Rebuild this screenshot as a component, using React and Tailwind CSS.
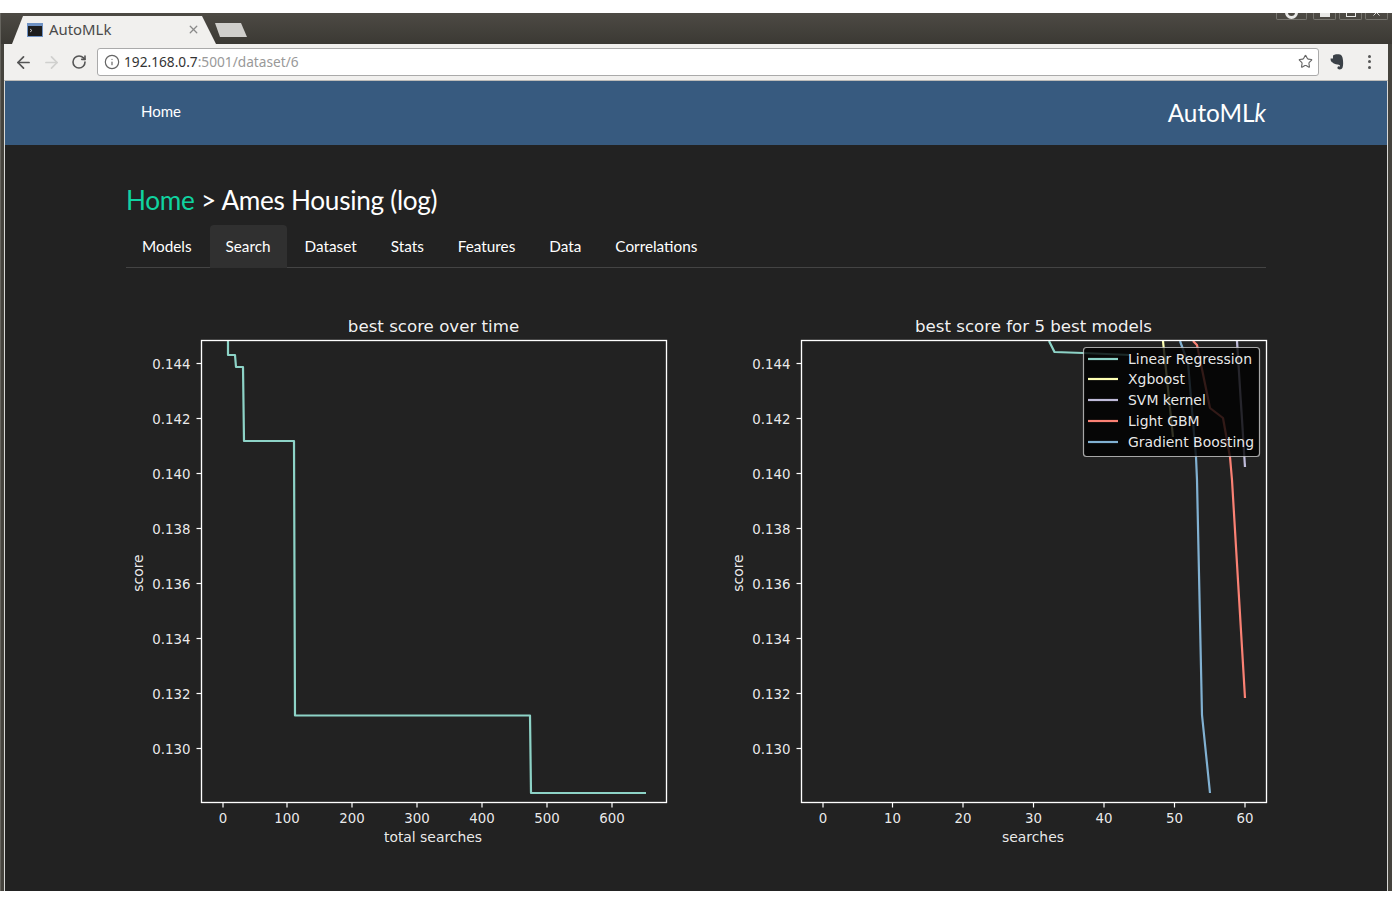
import React from "react";
import { ArrowLeft, ArrowRight, RotateCw, Info, Star, X } from "lucide-react";

const yTicks = [
  ["0.144", 364],
  ["0.142", 419],
  ["0.140", 474],
  ["0.138", 529],
  ["0.136", 584],
  ["0.134", 639],
  ["0.132", 694],
  ["0.130", 749],
];

function Chart({ x0, title, xlabel, xTicks, children, overlay }) {
  const box = { l: x0 + 75.5, r: x0 + 540.5, t: 340.5, b: 802.5 };
  return (
    <svg
      viewBox={`${x0} 310 600 560`}
      className="w-[600px] h-[560px] shrink-0 block font-['DejaVu_Sans',sans-serif]"
    >
      <text x={(box.l + box.r) / 2 - 0.5} y="332" textAnchor="middle" fontSize="16.65" fill="#fff" fillOpacity="0.95">
        {title}
      </text>
      {children}
      {yTicks.map(([t, y]) => (
        <g key={t}>
          <line x1={box.l - 5} x2={box.l} y1={y - 0.5} y2={y - 0.5} stroke="#fff" strokeWidth="1.2" />
          <text x={box.l - 11} y={y + 5} textAnchor="end" fontSize="13.33" fill="#fff" fillOpacity="0.92">
            {t}
          </text>
        </g>
      ))}
      {xTicks.map(([t, x]) => (
        <g key={t}>
          <line x1={x} x2={x} y1={box.b} y2={box.b + 5} stroke="#fff" strokeWidth="1.2" />
          <text x={x} y="823" textAnchor="middle" fontSize="13.33" fill="#fff" fillOpacity="0.92">
            {t}
          </text>
        </g>
      ))}
      <text
        transform={`translate(${x0 + 17} 573) rotate(-90)`}
        textAnchor="middle"
        fontSize="13.9"
        fill="#fff"
        fillOpacity="0.92"
      >
        score
      </text>
      <text x={(box.l + box.r) / 2 - 1} y="842" textAnchor="middle" fontSize="13.9" fill="#fff" fillOpacity="0.92">
        {xlabel}
      </text>
      {overlay}
      <rect x={box.l} y={box.t} width={box.r - box.l} height={box.b - box.t} fill="none" stroke="#fff" strokeWidth="1.33" />
    </svg>
  );
}

const P = ({ d, c }) => <polyline points={d} fill="none" stroke={c} strokeWidth="2.2" strokeLinejoin="round" />;

function Legend() {
  const rows = [
    ["Linear Regression", "#8dd3c7", 359],
    ["Xgboost", "#feffb3", 379],
    ["SVM kernel", "#bfbbd9", 400],
    ["Light GBM", "#fa8174", 421],
    ["Gradient Boosting", "#81b1d2", 442],
  ];
  return (
    <g>
      <rect x="1083.5" y="347.5" width="176" height="109" rx="3" fill="#000" fillOpacity="0.8" stroke="#ccc" strokeOpacity="0.8" strokeWidth="1.2" />
      {rows.map(([t, c, y]) => (
        <g key={t}>
          <line x1="1088" x2="1118" y1={y} y2={y} stroke={c} strokeWidth="2.2" />
          <text x="1128" y={y + 5} fontSize="13.95" fill="#fff" fillOpacity="0.92">
            {t}
          </text>
        </g>
      ))}
    </g>
  );
}

const tabs = ["Models", "Search", "Dataset", "Stats", "Features", "Data", "Correlations"];

export default function App() {
  return (
    <div className="w-[1392px] h-[904px] bg-white pt-[13px] overflow-hidden font-['Lato',sans-serif]">
      <div className="h-[878px] flex flex-col bg-[#45433d]">
        {/* tab strip */}
        <div className="relative h-[31px] shrink-0 bg-gradient-to-b from-[#4d4a44] to-[#3b3934] border-l border-[#66645e]">
          <svg className="absolute left-[-1px] top-0" width="260" height="31" viewBox="0 13 260 31">
            <path d="M12 44 L23 16 L202 16 L216 44 Z" fill="#f1f0ee" />
            <path d="M215 23 L241 23 L247 37 L220 37 Z" fill="#cfcecb" />
            <rect x="27.5" y="23.5" width="15" height="13" fill="#1d1d1d" stroke="#6f92c4" />
            <rect x="28" y="24" width="14" height="2" fill="#6f92c4" />
            <path d="M30 29 L32 30.5 L30 32" fill="none" stroke="#ddd" strokeWidth="0.8" />
          </svg>
          <span className="absolute left-[48px] top-[6px] text-[14.9px] leading-[21px] text-[#4a4a4a] font-['Noto_Sans',sans-serif]">
            AutoMLk
          </span>
          <X className="absolute left-[186px] top-[10px] text-[#8a8a8a]" size={13} strokeWidth={2.4} />
          <div className="absolute left-[1275px] top-0 w-[31px] h-[7px] rounded-b-[2px] border border-t-0 border-[#77756f] flex justify-center overflow-hidden">
            <div className="w-[13px] h-[13px] rounded-full border-[3px] border-[#e8e8e6] mt-[-7px]"></div>
          </div>
          <div className="absolute left-[1312px] top-0 w-[23px] h-[7px] rounded-b-[2px] border border-t-0 border-[#77756f] flex justify-center">
            <div className="w-[10px] h-[4px] bg-[#e8e8e6]"></div>
          </div>
          <div className="absolute left-[1338px] top-0 w-[23px] h-[7px] rounded-b-[2px] border border-t-0 border-[#77756f] flex justify-center">
            <div className="w-[10px] h-[4px] border border-t-0 border-[#e8e8e6]"></div>
          </div>
          <div className="absolute left-[1364px] top-0 w-[23px] h-[7px] rounded-b-[2px] border border-t-0 border-[#77756f] flex justify-center overflow-hidden">
            <X className="text-[#e8e8e6] mt-[-6px]" size={11} strokeWidth={2} />
          </div>
        </div>

        <div className="flex-1 flex min-h-0 pl-[4px] pr-[4px] border-l border-[#66645e] ml-0">
          <div className="flex-1 flex flex-col min-w-0 ml-[-1px]">
            {/* toolbar */}
            <div className="h-[37px] shrink-0 bg-[#f1f0ee] border-b border-[#bdbcb9] flex items-center relative">
              <ArrowLeft className="ml-[10px] text-[#555]" size={19} strokeWidth={2.2} />
              <ArrowRight className="ml-[9px] text-[#d0d0ce]" size={19} strokeWidth={2.2} />
              <RotateCw className="ml-[10px] text-[#555]" size={16} strokeWidth={2.4} />
              <div className="ml-[10px] w-[1222px] h-[28px] mb-[1px] bg-white border border-[#aaa] rounded-[3px] flex items-center pl-[6px] pr-[5px] text-[13.7px] font-['Noto_Sans',sans-serif]">
                <Info className="text-[#666]" size={16} strokeWidth={1.8} />
                <span className="ml-[4px] pt-[1px] text-[#333]">192.168.0.7</span>
                <span className="pt-[1px] text-[#999]">:5001/dataset/6</span>
                <Star className="ml-auto text-[#666]" size={15} strokeWidth={1.8} />
              </div>
              <svg className="ml-[11px]" width="14" height="16" viewBox="0 0 14 16">
                <path
                  d="M3 1.5 C5 0 8 0 10 0.6 C11.5 1.2 12.5 2.5 12.8 5 C13.2 8 13.4 11 12.6 13.5 C12 15.5 9.5 16 8 15 C7 14.3 7.3 12.5 8.6 12.2 C9.2 12 9.8 12.4 10 12.8 C10.4 11.5 9.4 10.8 7.6 10.6 C5.2 10.4 3.5 9.5 2.6 8.6 C1.2 7.8 0.4 6.4 0.6 4.4 L3 4.4 Z"
                  fill="#3b4147"
                />
              </svg>
              <div className="ml-[24px] flex flex-col gap-[2.5px] mb-[1px]">
                <div className="w-[3px] h-[3px] rounded-full bg-[#555]"></div>
                <div className="w-[3px] h-[3px] rounded-full bg-[#555]"></div>
                <div className="w-[3px] h-[3px] rounded-full bg-[#555]"></div>
              </div>
            </div>

            {/* page */}
            <div className="flex-1 min-h-0 flex flex-col bg-[#222222] border-l border-r border-[#d8d8d6] overflow-hidden">
              <div className="h-[64px] shrink-0 bg-[#375a7f]">
                <div className="w-[1140px] mx-auto h-full flex items-center justify-between">
                  <a className="ml-[15px] text-[15px] text-white mb-[3px]">Home</a>
                  <span className="text-[24.3px] text-white">
                    AutoML<i>k</i>
                  </span>
                </div>
              </div>

              <div className="w-[1140px] mx-auto">
                <h2 className="mt-[37px] h-[37px] text-[26.2px] leading-[37px] text-white tracking-[-0.3px]">
                  <span className="text-[#10d3a0]">Home</span> &gt; Ames Housing (log)
                </h2>
                <div className="mt-[6px] h-[43px] flex gap-[2px] border-b border-[#444444]">
                  {tabs.map((t) => (
                    <div
                      key={t}
                      className={
                        t === "Search"
                          ? "h-[43px] px-[16px] text-[15.3px] leading-[43px] text-white bg-[#303030] rounded-t-[4px]"
                          : "h-[43px] px-[16px] text-[15.3px] leading-[43px] text-white"
                      }
                    >
                      {t}
                    </div>
                  ))}
                </div>
                <div className="mt-[42px] flex">
                  <Chart
                    x0={126}
                    title="best score over time"
                    xlabel="total searches"
                    xTicks={[
                      ["0", 223],
                      ["100", 287],
                      ["200", 352],
                      ["300", 417],
                      ["400", 482],
                      ["500", 547],
                      ["600", 612],
                    ]}
                  >
                    <P
                      c="#8dd3c7"
                      d="228,341 228,355 235,355 236,367 243,367 244,441 294,441 295,715.5 530,715.5 531,793 646,793"
                    />
                  </Chart>
                  <Chart
                    x0={726}
                    title="best score for 5 best models"
                    xlabel="searches"
                    xTicks={[
                      ["0", 823],
                      ["10", 892.5],
                      ["20", 963],
                      ["30", 1033.5],
                      ["40", 1104],
                      ["50", 1174.5],
                      ["60", 1245],
                    ]}
                    overlay={<Legend />}
                  >
                    <P c="#8dd3c7" d="1049,341 1054.5,352 1083,353 1130,355" />
                    <P c="#feffb3" d="1163,341 1173,437" />
                    <P c="#bfbbd9" d="1237,341 1245,467" />
                    <P c="#fa8174" d="1193,341 1197,345 1210,408 1223,418 1230,457 1232,480 1245,698" />
                    <P c="#81b1d2" d="1180,341 1188,363 1196,457 1197,480 1202,715 1210,793" />
                  </Chart>
                </div>
              </div>
            </div>
          </div>
        </div>
      </div>
    </div>
  );
}
